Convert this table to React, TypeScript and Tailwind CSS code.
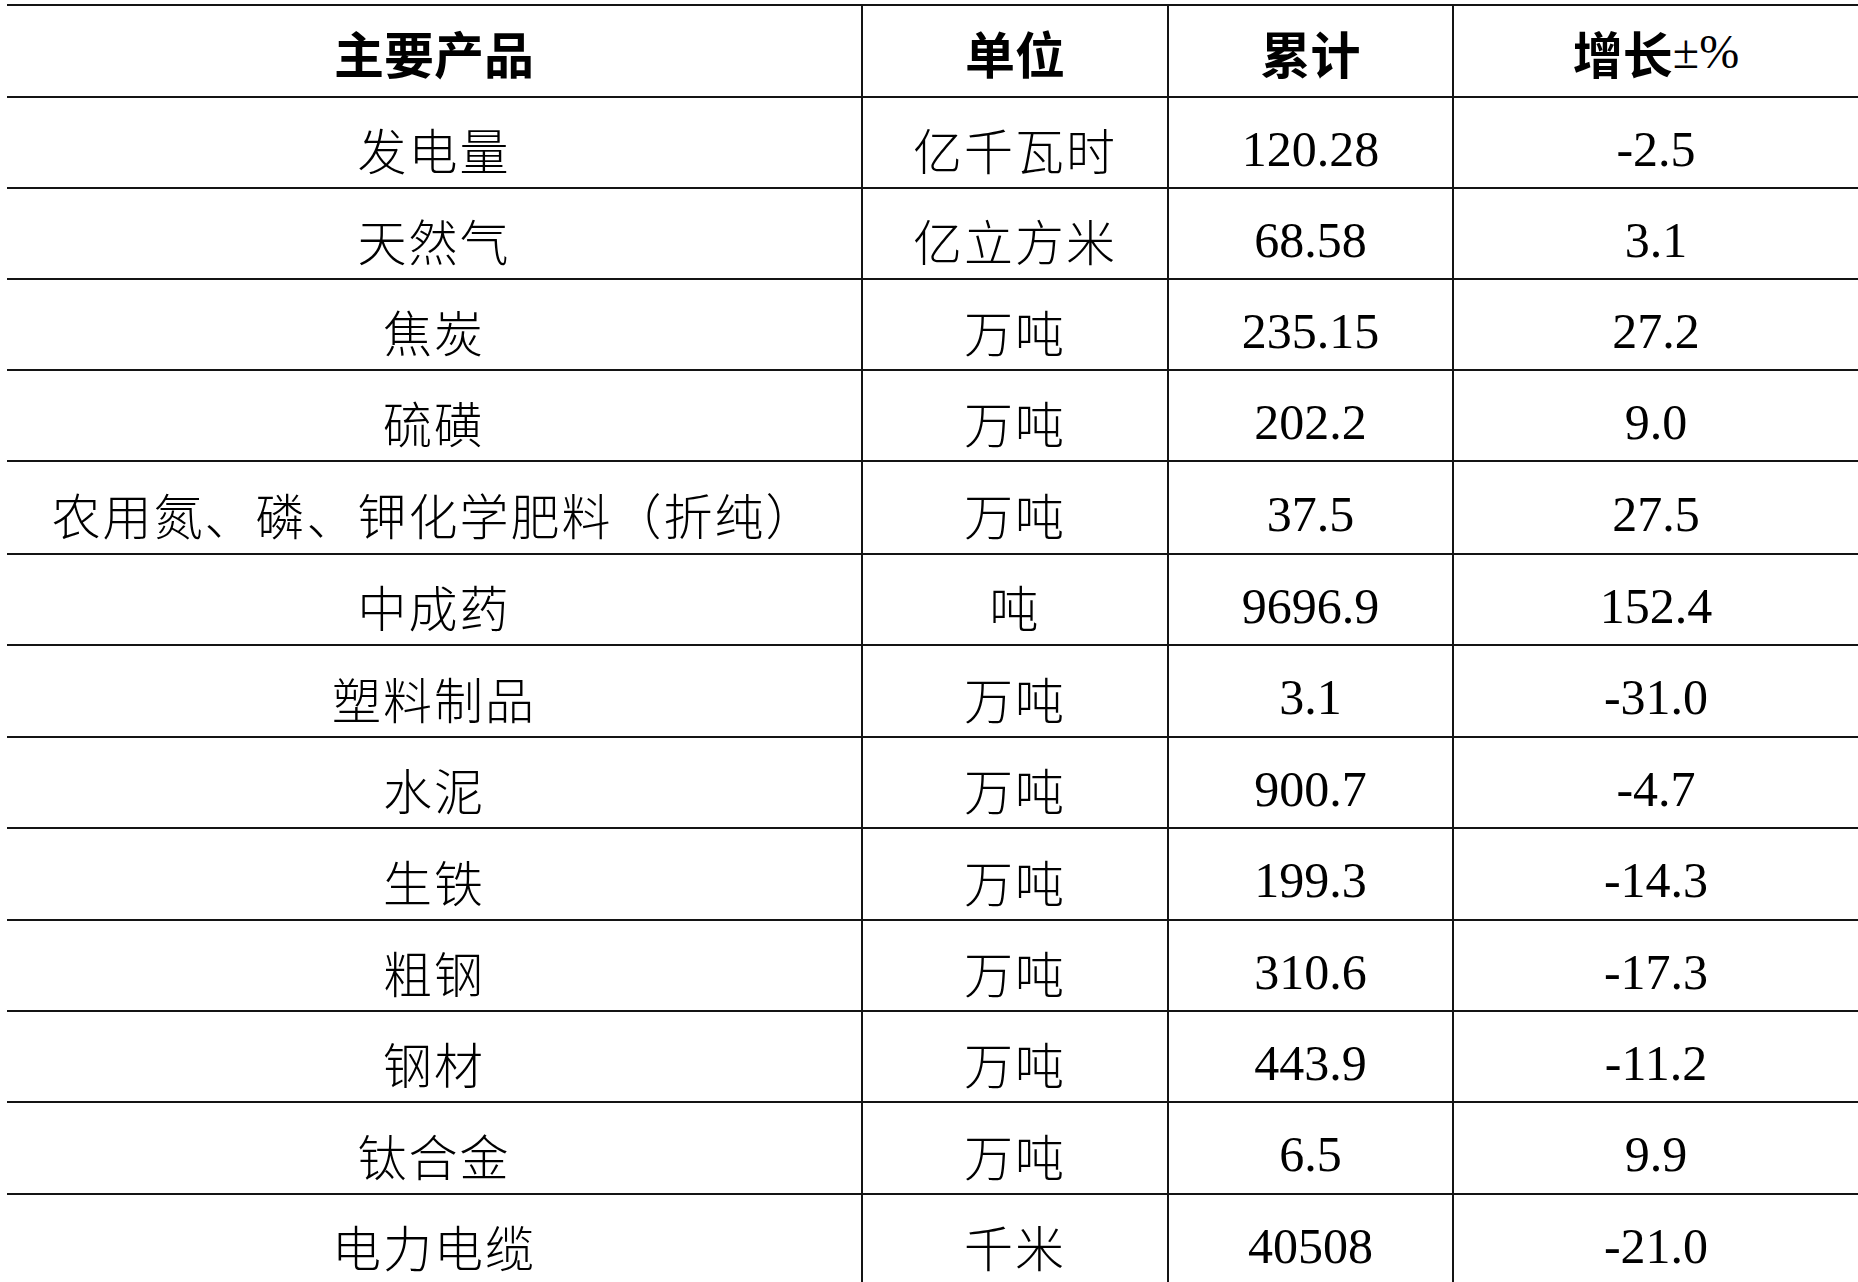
import React from "react";

const rows: { name: string; unit: string; total: string; growth: string; h: string }[] = [
  { name: "发电量", unit: "亿千瓦时", total: "120.28", growth: "-2.5", h: "h-[91px]" },
  { name: "天然气", unit: "亿立方米", total: "68.58", growth: "3.1", h: "h-[91px]" },
  { name: "焦炭", unit: "万吨", total: "235.15", growth: "27.2", h: "h-[91px]" },
  { name: "硫磺", unit: "万吨", total: "202.2", growth: "9.0", h: "h-[91px]" },
  { name: "农用氮、磷、钾化学肥料（折纯）", unit: "万吨", total: "37.5", growth: "27.5", h: "h-[93px]" },
  { name: "中成药", unit: "吨", total: "9696.9", growth: "152.4", h: "h-[91px]" },
  { name: "塑料制品", unit: "万吨", total: "3.1", growth: "-31.0", h: "h-[92px]" },
  { name: "水泥", unit: "万吨", total: "900.7", growth: "-4.7", h: "h-[91px]" },
  { name: "生铁", unit: "万吨", total: "199.3", growth: "-14.3", h: "h-[92px]" },
  { name: "粗钢", unit: "万吨", total: "310.6", growth: "-17.3", h: "h-[91px]" },
  { name: "钢材", unit: "万吨", total: "443.9", growth: "-11.2", h: "h-[91px]" },
  { name: "钛合金", unit: "万吨", total: "6.5", growth: "9.9", h: "h-[92px]" },
  { name: "电力电缆", unit: "千米", total: "40508", growth: "-21.0", h: "h-[91px]" },
];

const serif = "font-['Liberation_Serif','Noto_Sans_CJK_SC',serif]";
const cjk = "font-['Noto_Sans_CJK_SC',sans-serif]";

export default function App() {
  return (
    <div className="w-[1858px] h-[1282px] overflow-hidden bg-white text-black">
      <div className="ml-[7px] mt-[4px] border-t-2 border-[#141414]">
        <div className="grid grid-cols-[854px_306px_285px_1fr] h-[92px] border-b-2 border-[#141414]">
          <div className={`flex items-center justify-center pt-[2px] ${cjk} font-bold text-[50px] leading-none`}>主要产品</div>
          <div className={`flex items-center justify-center pt-[2px] border-l-2 border-[#141414] ${cjk} font-bold text-[50px] leading-none`}>单位</div>
          <div className={`flex items-center justify-center pt-[2px] border-l-2 border-[#141414] ${cjk} font-bold text-[50px] leading-none`}>累计</div>
          <div className={`flex items-center justify-center pt-[2px] border-l-2 border-[#141414] text-[50px] leading-none`}>
            <span className={`${cjk} font-bold`}>增长</span>
            <span className={`${serif} font-normal text-[48px]`}>±%</span>
          </div>
        </div>
        {rows.map((r, i) => (
          <div key={i} className={`grid grid-cols-[854px_306px_285px_1fr] ${r.h} border-b-2 border-[#141414]`}>
            <div className={`flex items-center justify-center pt-[12px] ${cjk} font-light text-[49px] tracking-[2px] leading-none`}>{r.name}</div>
            <div className={`flex items-center justify-center pt-[12px] border-l-2 border-[#141414] ${cjk} font-light text-[49px] tracking-[2px] leading-none`}>{r.unit}</div>
            <div className={`flex items-center justify-center pt-[12px] border-l-2 border-[#141414] ${serif} text-[50px] leading-none`}>{r.total}</div>
            <div className={`flex items-center justify-center pt-[12px] border-l-2 border-[#141414] ${serif} text-[50px] leading-none`}>{r.growth}</div>
          </div>
        ))}
      </div>
    </div>
  );
}
